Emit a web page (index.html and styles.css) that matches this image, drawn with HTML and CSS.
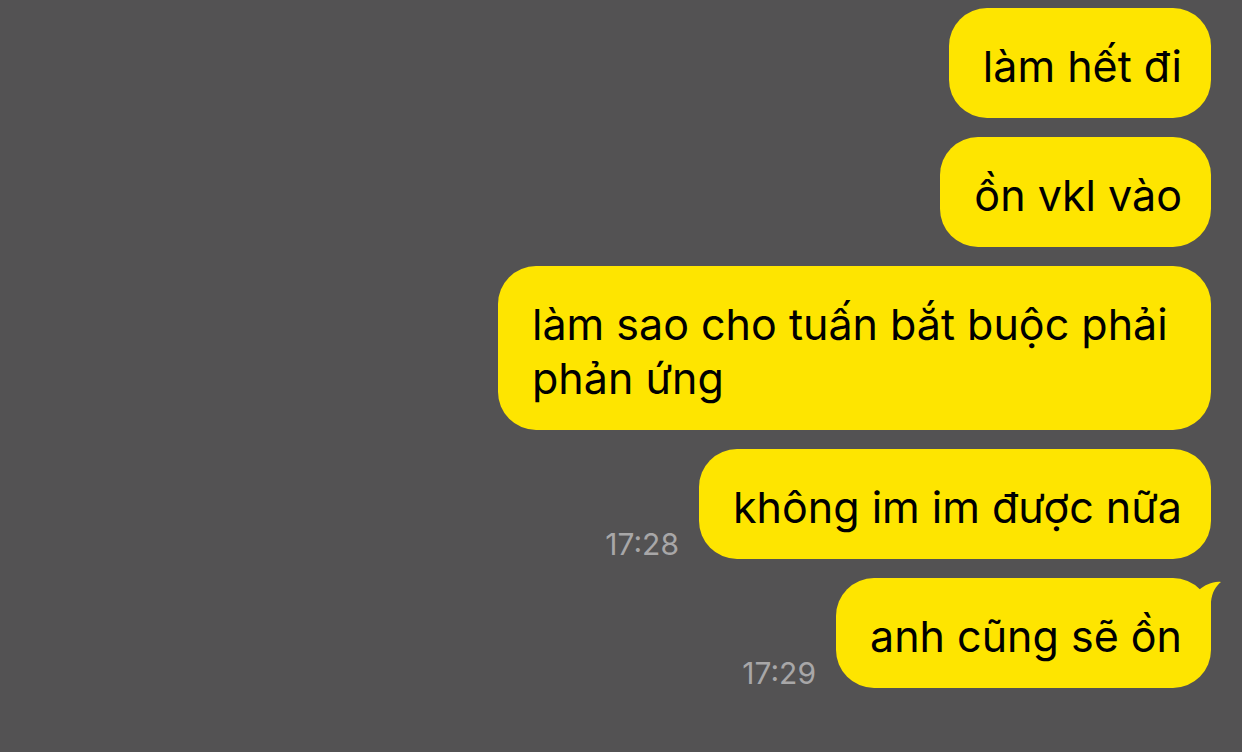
FILE: index.html
```html
<!DOCTYPE html>
<html lang="vi">
<head>
  <meta charset="UTF-8" />
  <meta name="viewport" content="width=device-width, initial-scale=1.0" />
  <title>Chat</title>
  <link rel="stylesheet" href="styles.css">
</head>
<body>
  <div class="chat">
    <div class="row">
      <div class="bubble">làm hết đi</div>
    </div>
    <div class="row">
      <div class="bubble">ồn vkl vào</div>
    </div>
    <div class="row">
      <div class="bubble">làm sao cho tuấn bắt buộc phải phản ứng</div>
    </div>
    <div class="row">
      <span class="time">17:28</span>
      <div class="bubble">không im im được nữa</div>
    </div>
    <div class="row">
      <span class="time">17:29</span>
      <div class="bubble last">
        anh cũng sẽ ồn
        <svg class="tail" width="40" height="40" viewBox="0 0 40 40">
          <path d="M18 12 C24 7 32 3 40 4 C35 8 31 14 30 24 L30 40 L18 40 Z" fill="#fee500" />
        </svg>
      </div>
    </div>
  </div>
</body>
</html>
```

FILE: styles.css
```css
body {
  margin: 0;
  background: #535253;
  font-family: Inter, "Noto Sans", sans-serif;
}
.chat {
  display: flex;
  flex-direction: column;
  align-items: flex-end;
  gap: 19px;
  padding: 8px 31px 0 0;
}
.row {
  display: flex;
  align-items: flex-end;
  justify-content: flex-end;
  gap: 20px;
}
.bubble {
  position: relative;
  max-width: 650px;
  padding: 31px 29px 25px 34px;
  background: #fee500;
  color: #000;
  border-radius: 38px;
  font-size: 43px;
  line-height: 54px;
}
.time {
  color: #a8a7a8;
  font-size: 30px;
  line-height: 30px;
}
.tail {
  position: absolute;
  top: 0;
  right: -10px;
}
```
